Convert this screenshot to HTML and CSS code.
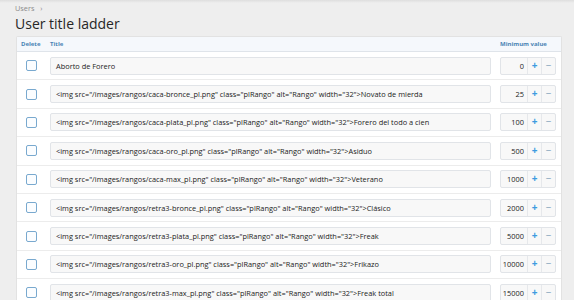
FILE: index.html
```html
<!DOCTYPE html>
<html>
<head>
<meta charset="utf-8">
<link rel="stylesheet" href="styles.css">
</head>
<body>
<div class="topbar"></div>
<div class="page">
  <div class="crumbs">Users <span class="sep">›</span></div>
  <h1 class="title">User title ladder</h1>
  <div class="block">
    <div class="head">
      <div class="h-del">Delete</div>
      <div class="h-title">Title</div>
      <div class="h-min">Minimum value</div>
    </div>
    <div class="row"><span class="cb"></span><div class="tin">Aborto de Forero</div><div class="num"><span class="val">0</span><span class="btn plus">+</span><span class="btn minus">−</span></div></div>
    <div class="row"><span class="cb"></span><div class="tin">&lt;img src="/images/rangos/caca-bronce_pl.png" class="plRango" alt="Rango" width="32"&gt;Novato de mierda</div><div class="num"><span class="val">25</span><span class="btn plus">+</span><span class="btn minus">−</span></div></div>
    <div class="row"><span class="cb"></span><div class="tin">&lt;img src="/images/rangos/caca-plata_pl.png" class="plRango" alt="Rango" width="32"&gt;Forero del todo a cien</div><div class="num"><span class="val">100</span><span class="btn plus">+</span><span class="btn minus">−</span></div></div>
    <div class="row"><span class="cb"></span><div class="tin">&lt;img src="/images/rangos/caca-oro_pl.png" class="plRango" alt="Rango" width="32"&gt;Asiduo</div><div class="num"><span class="val">500</span><span class="btn plus">+</span><span class="btn minus">−</span></div></div>
    <div class="row"><span class="cb"></span><div class="tin">&lt;img src="/images/rangos/caca-max_pl.png" class="plRango" alt="Rango" width="32"&gt;Veterano</div><div class="num"><span class="val">1000</span><span class="btn plus">+</span><span class="btn minus">−</span></div></div>
    <div class="row"><span class="cb"></span><div class="tin">&lt;img src="/images/rangos/retra3-bronce_pl.png" class="plRango" alt="Rango" width="32"&gt;Clásico</div><div class="num"><span class="val">2000</span><span class="btn plus">+</span><span class="btn minus">−</span></div></div>
    <div class="row"><span class="cb"></span><div class="tin">&lt;img src="/images/rangos/retra3-plata_pl.png" class="plRango" alt="Rango" width="32"&gt;Freak</div><div class="num"><span class="val">5000</span><span class="btn plus">+</span><span class="btn minus">−</span></div></div>
    <div class="row"><span class="cb"></span><div class="tin">&lt;img src="/images/rangos/retra3-oro_pl.png" class="plRango" alt="Rango" width="32"&gt;Frikazo</div><div class="num"><span class="val">10000</span><span class="btn plus">+</span><span class="btn minus">−</span></div></div>
    <div class="row"><span class="cb"></span><div class="tin">&lt;img src="/images/rangos/retra3-max_pl.png" class="plRango" alt="Rango" width="32"&gt;Freak total</div><div class="num"><span class="val">15000</span><span class="btn plus">+</span><span class="btn minus">−</span></div></div>
  </div>
</div>
</body>
</html>
```

FILE: styles.css
```css
html, body {
  margin: 0;
  padding: 0;
  background: #eeeeee;
  font-family: "Open Sans", "Noto Sans", sans-serif;
  color: #222;
  overflow: hidden;
}
.topbar {
  height: 3px;
  background: linear-gradient(#dedede, #eeeeee);
}
.page {
  padding: 0 12px 0 16px;
}
.crumbs {
  font-size: 7.3px;
  color: #8a8a8a;
  line-height: 9px;
  margin: 1px 0 0 -1px;
}
.crumbs .sep {
  margin-left: 4px;
}
.title {
  margin: 0 0 0 -1px;
  font-weight: 400;
  font-size: 14px;
  line-height: 21px;
  color: #262626;
}
.block {
  margin-top: 2px;
  background: #fff;
  border: 1px solid #e2e2e2;
  border-bottom: 0;
  border-radius: 2px 2px 0 0;
}
.head {
  display: flex;
  align-items: center;
  height: 14px;
  background: #f5f8fc;
  border-bottom: 1px solid #dfe4ea;
  font-size: 6px;
  font-weight: 700;
  color: #4a84b5;
}
.h-del {
  width: 33px;
  padding-left: 4px;
  box-sizing: border-box;
}
.h-title {
  flex: 1;
}
.h-min {
  width: 61px;
}
.row {
  display: flex;
  align-items: center;
  height: 28.4px;
  box-sizing: border-box;
  border-bottom: 1px solid #ececec;
  padding: 0 5px 0 9px;
}
.cb {
  width: 9px;
  height: 9px;
  border: 1px solid #79a9cf;
  border-radius: 2px;
  background: #fbfdff;
  flex: none;
}
.tin {
  flex: 1;
  margin-left: 13px;
  height: 18px;
  box-sizing: border-box;
  border: 1px solid #e1e4e8;
  border-radius: 2px;
  background: #f8f8f8;
  font-size: 7.4px;
  line-height: 16px;
  padding-left: 5px;
  white-space: nowrap;
  overflow: hidden;
  color: #222;
}
.num {
  display: flex;
  margin-left: 9px;
  width: 56px;
  height: 18px;
  box-sizing: border-box;
  border: 1px solid #e1e4e8;
  border-radius: 2px;
  background: #f8f8f8;
  flex: none;
}
.val {
  flex: 1;
  text-align: right;
  font-size: 7.4px;
  line-height: 16px;
  padding-right: 3px;
  color: #222;
}
.btn {
  width: 13px;
  flex: none;
  border-left: 1px solid #e6e8eb;
  text-align: center;
  font-size: 10px;
  line-height: 15px;
}
.plus {
  color: #3d9be0;
  font-weight: 700;
}
.minus {
  color: #7f9fb8;
  font-weight: 400;
}
```
